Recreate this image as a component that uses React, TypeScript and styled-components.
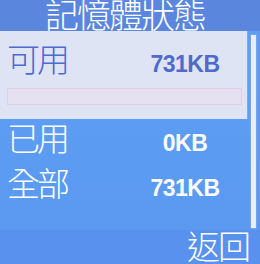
import React from "react";
import styled, { createGlobalStyle } from "styled-components";

const Global = createGlobalStyle`
  html, body { margin: 0; padding: 0; background: #5c9cf0; }
  body { width: 260px; height: 264px; overflow: hidden; }
`;

const cjk = `"Noto Sans CJK TC", "Noto Sans CJK SC", sans-serif`;
const latin = `"Liberation Sans", Arial, sans-serif`;

const Screen = styled.div`
  width: 260px;
  height: 264px;
  display: flex;
  flex-direction: column;
  background: linear-gradient(#5fa0f6, #5a98f0);
  overflow: hidden;
`;

const TitleBar = styled.div`
  height: 31px;
  flex: none;
  display: flex;
  justify-content: center;
  align-items: flex-start;
  padding-right: 10px;
  background: #5a86de;
  color: #ffffff;
  font-family: ${cjk};
  font-weight: 300;
  font-size: 34px;
  line-height: 27px;
  letter-spacing: -2px;
`;

const Body = styled.div`
  flex: 1;
  display: flex;
  align-items: flex-start;
`;

const List = styled.div`
  width: 248px;
  display: flex;
  flex-direction: column;
`;

const Panel = styled.div`
  height: 88px;
  box-sizing: border-box;
  padding-top: 9px;
  background: #dfe4f5;
  border-right: 1px solid #8aa4e4;
  display: flex;
  flex-direction: column;
`;

const Row = styled.div<{ $selected?: boolean }>`
  height: 45px;
  flex: none;
  display: flex;
  align-items: baseline;
  padding-left: 7px;
  color: ${(p) => (p.$selected ? "#4e6bcc" : "#ffffff")};
`;

const Label = styled.span`
  width: 141px;
  font-family: ${cjk};
  font-weight: 300;
  font-size: 33px;
  line-height: 36px;
  letter-spacing: -3px;
`;

const Value = styled.span`
  width: 74px;
  text-align: center;
  font-family: ${latin};
  font-weight: 700;
  font-size: 23px;
  line-height: 36px;
  letter-spacing: -0.5px;
`;

const Bar = styled.div`
  margin: 3px 5px 0 7px;
  height: 17px;
  box-sizing: border-box;
  border: 1px solid #e2cfe2;
  background: #e5e0f2;
`;

const Scrollbar = styled.div`
  width: 7px;
  height: 195px;
  margin: 3px 0 0 2px;
  box-sizing: border-box;
  border: 1px solid #7f9fe6;
  background: #e6eefb;
`;

const BottomBar = styled.div`
  height: 34px;
  flex: none;
  display: flex;
  justify-content: flex-end;
  align-items: flex-start;
  padding-right: 11px;
  background: #5891ee;
  color: #ffffff;
  font-family: ${cjk};
  font-weight: 300;
  font-size: 33px;
  line-height: 30px;
  letter-spacing: -2px;
`;

const rows = [
  { label: "已用", value: "0KB" },
  { label: "全部", value: "731KB" },
];

export default function App() {
  return (
    <>
      <Global />
      <Screen>
        <TitleBar>記憶體狀態</TitleBar>
        <Body>
          <List>
            <Panel>
              <Row $selected>
                <Label>可用</Label>
                <Value>731KB</Value>
              </Row>
              <Bar />
            </Panel>
            {rows.map((r) => (
              <Row key={r.label}>
                <Label>{r.label}</Label>
                <Value>{r.value}</Value>
              </Row>
            ))}
          </List>
          <Scrollbar />
        </Body>
        <BottomBar>返回</BottomBar>
      </Screen>
    </>
  );
}
